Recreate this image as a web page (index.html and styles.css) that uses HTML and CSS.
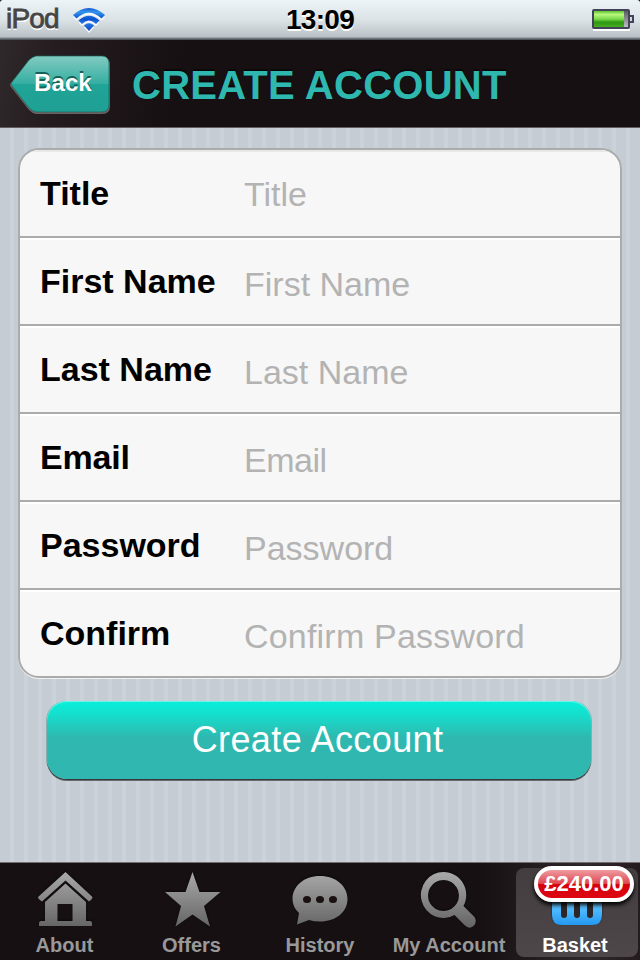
FILE: index.html
```html
<!DOCTYPE html>
<html lang="en">
<head>
<meta charset="utf-8">
<title>Create Account</title>
<link rel="stylesheet" href="styles.css">
</head>
<body>
<div class="screen">
  <header class="status">
    <div class="status-left"><span class="carrier">iPod</span>
      <svg class="wifi" width="34" height="26" viewBox="0 0 34 26">
        <defs><linearGradient id="wf" x1="0" y1="0" x2="0" y2="25" gradientUnits="userSpaceOnUse"><stop offset="0" stop-color="#1048c4"/><stop offset=".2" stop-color="#3295ee"/><stop offset=".48" stop-color="#0b50d0"/><stop offset=".65" stop-color="#2877e4"/><stop offset="1" stop-color="#0645bd"/></linearGradient></defs>
        <g fill="url(#wf)"><path d="M1 8Q17-6 33 8L29.500 11.500Q17 0 4.500 11.500Z"/><path d="M6.500 13.500Q17 4 27.500 13.500L24 17Q17 10 10 17Z"/><path d="M12 18.500Q17 14 22 18.500L17 24Z"/></g>
      </svg>
    </div>
    <time class="clock">13:09</time>
    <svg class="battery" width="43" height="22" viewBox="0 0 43 22">
      <defs><linearGradient id="bt" x2="0" y2="1"><stop offset="0" stop-color="#5fc42f"/><stop offset=".22" stop-color="#b8f77e"/><stop offset=".5" stop-color="#7ad94a"/><stop offset=".7" stop-color="#2d9713"/><stop offset="1" stop-color="#48ad20"/></linearGradient><linearGradient id="bc" x2="0" y2="1"><stop stop-color="#55555b"/><stop offset="1" stop-color="#c4c4c8"/></linearGradient></defs>
      <path d="M1 21H38" stroke="#fff" stroke-width="2"/>
      <rect x="1" y="1" width="36" height="18" rx="1" fill="url(#bc)" stroke="#414358" stroke-width="2"/>
      <rect x="2" y="2" width="30" height="16" fill="url(#bt)"/>
      <path d="M38 7h3v6h-3" fill="#d4d8dc" stroke="#414358" stroke-width="2"/>
    </svg>
  </header>

  <nav class="navbar">
    <a class="back">
      <svg width="102" height="62" viewBox="0 0 102 62">
        <defs><linearGradient id="bk" x2="0" y2="1"><stop stop-color="#82cbc2"/><stop offset=".5" stop-color="#34ada1"/><stop offset=".51" stop-color="#1fa497"/><stop offset="1" stop-color="#20a094"/></linearGradient></defs>
        <path d="M27 3H93Q101 3 101 11V52Q101 60 93 60H27Q23 59 20 56L2 33Q0 31 2 29L20 7Q23 4 27 3Z" fill="#706064"/>
        <path d="M27 2H93Q100 2 100 10V50Q100 58 93 58H27Q23 57 20 54L3 32Q1 30 3 28L20 6Q23 3 27 2Z" fill="url(#bk)" stroke="#176159" stroke-width=".7"/>
      </svg>
      <span class="back-label">Back</span>
    </a>
    <h1 class="title">CREATE ACCOUNT</h1>
  </nav>

  <main class="content">
    <div class="form">
      <div class="row first"><span class="label">Title</span><span class="hint">Title</span></div>
      <div class="row"><span class="label">First Name</span><span class="hint">First Name</span></div>
      <div class="row"><span class="label">Last Name</span><span class="hint">Last Name</span></div>
      <div class="row email"><span class="label">Email</span><span class="hint">Email</span></div>
      <div class="row"><span class="label">Password</span><span class="hint">Password</span></div>
      <div class="row confirm"><span class="label">Confirm</span><span class="hint">Confirm Password</span></div>
    </div>
    <div class="submit">Create Account</div>
  </main>

  <footer class="tabs">
    <a class="tab"><svg class="icon" width="60" height="60" viewBox="0 0 60 60">
      <defs><linearGradient id="ic" x1="0" y1="2" x2="0" y2="58" gradientUnits="userSpaceOnUse"><stop stop-color="#a8a8a8"/><stop offset="1" stop-color="#626262"/></linearGradient></defs>
      <g fill="url(#ic)"><path d="M30.500 1L57.500 26Q57.500 28 54 30.500L30.500 9.500L7 30.500Q3 28 3 26Z"/><path d="M30.500 12.500L51 31V50H55Q57 50 57 52V55H4V52Q4 50 6 50H10V31ZM22.500 33V50H37.500V33Z" fill-rule="evenodd"/></g></svg><span>About</span></a>
    <a class="tab"><svg class="icon" width="60" height="60" viewBox="0 0 60 60"><path d="M30.500 1L37.500 21H58.500L42 35L48 55.500L30.500 43.500L13.500 55.500L19 35L3 21H23.500Z" fill="url(#ic)"/></svg><span>Offers</span></a>
    <a class="tab"><svg class="icon" width="60" height="60" viewBox="0 0 60 60"><path d="M30 5C46 5 57.500 15 57.500 28S46 50.500 30 50.500Q24 50.500 19 49L7 53.500L9 42Q2.500 36 2.500 28C2.500 15 14 5 30 5Z" fill="url(#ic)"/><g fill="#1a1012"><ellipse cx="17" cy="28.500" rx="4" ry="3.500"/><ellipse cx="30" cy="28.500" rx="4" ry="3.500"/><ellipse cx="43" cy="28.500" rx="4" ry="3.500"/></g></svg><span>History</span></a>
    <a class="tab"><svg class="icon" width="60" height="60" viewBox="0 0 60 60"><path d="M24.500 1A22.500 23 0 1 0 35.500 44L46 54.500Q50 58.500 54.500 55Q58.500 51 55.500 46L44.500 35A22.500 23 0 0 0 24.500 1ZM24.500 9A15.500 15.500 0 1 1 24.400 9Z" fill="url(#ic)" fill-rule="evenodd"/></svg><span>My Account</span></a>
    <a class="tab active"><svg class="icon" width="60" height="60" viewBox="0 0 60 60"><defs><linearGradient id="bs" x2="0" y2="1"><stop stop-color="#91d8ff"/><stop offset=".6" stop-color="#48b6ff"/><stop offset="1" stop-color="#2498f0"/></linearGradient></defs><path d="M7 20H57V44Q57 54 47 54H17Q7 54 7 44Z" fill="url(#bs)"/><g fill="#2c2629"><rect x="16" y="27" width="6" height="20" rx="3"/><rect x="29" y="27" width="6" height="20" rx="3"/><rect x="42" y="27" width="6" height="20" rx="3"/></g></svg><span>Basket</span><b class="badge">£240.00</b></a>
  </footer>
</div>
</body>
</html>
```
FILE: styles.css
```css
* { box-sizing: border-box; }
body { margin: 0; font-family: "Liberation Sans", Arial, sans-serif; }
.screen { width: 640px; height: 960px; overflow: hidden; display: flex; flex-direction: column; background: #171013; }

.status { height: 40px; flex: none; display: grid; grid-template-columns: 1fr auto 1fr; background: linear-gradient(#edf4f8, #dce3e6 50%, #bac1c5 37px, #7e858a 38px, #454b51); border-radius: 3px 3px 0 0; }
.status-left { display: flex; padding: 7px 0 0 6px; }
.carrier { width: 66px; font-size: 28px; line-height: 24px; letter-spacing: -.8px; color: #454545; -webkit-text-stroke: .8px #454545; text-shadow: 0 2px 0 #fff; }
.wifi { filter: drop-shadow(0 2px 0 #f7faff); }
.clock { padding-top: 7px; font-size: 28px; line-height: 25px; font-weight: bold; letter-spacing: -.7px; color: #000; text-shadow: 0 2px 0 #fff; }
.battery { justify-self: end; margin: 9px 5px 0 0; }

.navbar { height: 88px; flex: none; display: flex; padding: 14px 0 0 9px; border-bottom: 1px solid #625c60; background: linear-gradient(100deg, #30292b, #241c1f 9%, #171013 28%); }
.back { width: 102px; height: 62px; display: grid; }
.back > * { grid-area: 1 / 1; }
.back-label { padding: 16px 0 0 25px; font-size: 24px; line-height: 26px; font-weight: bold; letter-spacing: .1px; color: #fff; text-shadow: 0 -2px 0 #156158; }
.title { margin: 8px 0 0 21px; font-size: 40px; line-height: 46px; font-weight: bold; letter-spacing: .25px; color: #2fb8af; text-shadow: 0 -2px 0 #0b0809; white-space: nowrap; }

.content { height: 734px; flex: none; padding: 20px 18px 0; background: linear-gradient(90deg, #c5ccd4 10px, transparent 10px 630px, #c5ccd4 630px), repeating-linear-gradient(90deg, #c5ccd4 0 10px, #cbd2da 10px 14px); }
.form { width: 604px; height: 530px; border: 2px solid #ababab; border-radius: 21px; background: #f7f7f7; box-shadow: 0 1px 0 #eef1f3; overflow: hidden; }
.row { height: 88px; display: flex; padding: 24px 0 0 20px; border-top: 2px solid #ababab; box-shadow: inset 0 2px 0 #fff; font-size: 34px; line-height: 38px; white-space: nowrap; }
.row.first { height: 86px; border-top: 0; padding-top: 24px; box-shadow: inset 0 2px 0 #e8e8e8; }
.label { width: 204px; flex: none; font-weight: bold; color: #000; }
.hint { padding-top: 3px; color: #b3b3b3; }
.first .hint { padding-top: 1px; }
.email .label { letter-spacing: -.2px; }
.email .hint { letter-spacing: -.5px; }
.confirm .hint { letter-spacing: .2px; }
.submit { width: 544px; height: 78px; margin: 23px 0 0 29px; padding: 18px 3px 0 0; border-radius: 20px; background: linear-gradient(#09efdc, #15dfcd 17%, #2fb8af 47%, #30b7af); box-shadow: inset 0 1px 0 #6ff3e6, 0 1px 0 #343a3c, 0 2px 0 #66696d, 1px 0 0 #8aaeb1, -1px 0 0 #8aaeb1; color: #fff; font-size: 36px; line-height: 41px; letter-spacing: .4px; text-align: center; }

.tabs { height: 98px; flex: none; display: grid; grid-template-columns: 129px 125px 132px 126px 126px; border-top: 1px solid #756e70; background: linear-gradient(90deg, #171013 75%, #30292b 92%, #231b1d); }
.tab { position: relative; display: flex; flex-direction: column; align-items: center; padding-top: 8px; font-size: 20px; line-height: 24px; font-weight: bold; color: #999; white-space: nowrap; }
.icon { flex: none; margin-bottom: 2px; filter: drop-shadow(0 -1px 1px #0008); }
.active { margin: 5px 0 4px 4px; padding-top: 3px; padding-right: 4px; border-radius: 8px; background: linear-gradient(#433d3f, #4d4749); color: #fff; }
.badge { position: absolute; left: 18px; top: -2px; width: 100px; height: 36px; border: 4px solid #fff; border-radius: 18px; background: linear-gradient(#ef9ba0, #df4851 48%, #d4000b 52%, #dd0712); box-shadow: 0 3px 4px #000; font-size: 22px; line-height: 27px; text-align: center; color: #fff; }
```
